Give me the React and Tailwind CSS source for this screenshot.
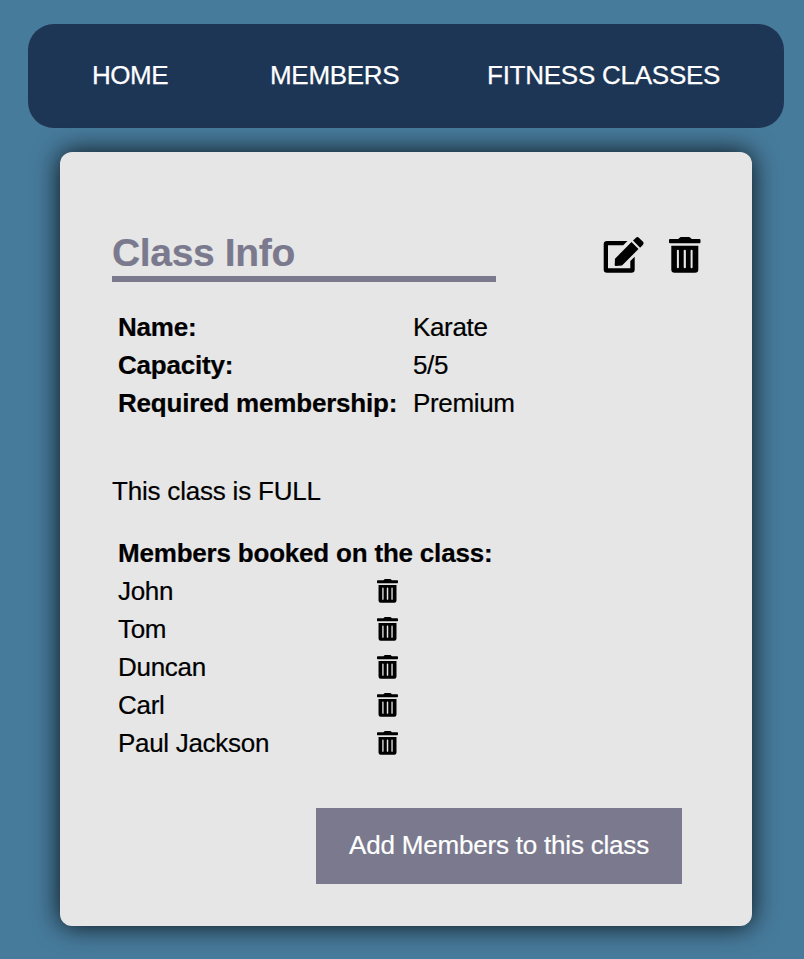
const members = ["John", "Tom", "Duncan", "Carl", "Paul Jackson"];

function Edit({ className }) {
  return (
    <svg viewBox="0 0 41 38" className={className} aria-hidden="true">
      <path d="M24.500 5H4Q.7 5 .7 8.300V33.400Q.7 36.700 4 36.700H28.400Q31.700 36.700 31.700 33.400V20.700L27.300 25V32.200H5V9.300H20.200Z" />
      <path d="M12 22.700L28.500 6.100 35.500 13.100 19 29.400 13 30Q11.700 30.100 11.700 29Z" />
      <path d="M30 4.600L32.700 1.900Q34.400.3 36.100 1.900L39.800 5.600Q41.400 7.300 39.800 9L37.100 11.700Z" />
    </svg>
  );
}

function Trash({ className }) {
  return (
    <svg viewBox="0 0 32 36" className={className} aria-hidden="true">
      <path
        fillRule="evenodd"
        d="M1 2h7.800Q9.700 2 10.400 1 11.100 0 12.200 0h7.600Q20.900 0 21.600 1 22.300 2 23.200 2h7.300q1 0 1 1v2.200q0 1-1 1H1q-1 0-1-1V3q0-1 1-1zM2.300 8.800h27V32.400q0 3.300-3.300 3.300H5.600q-3.300 0-3.300-3.300zM8.900 12.700q-1 0-1 1v16.600q0 1 1 1t1-1V13.700q0-1-1-1zM15.800 12.700q-1.100 0-1.100 1v16.600q0 1 1.100 1t1.100-1V13.700q0-1-1.100-1zM22.600 12.700q-1 0-1 1v16.600q0 1 1 1t1-1V13.700q0-1-1-1z"
      />
    </svg>
  );
}

export default function App() {
  return (
    <div className="min-h-[959px] w-[804px] overflow-hidden bg-[#477b9c] pt-6 text-[26px] leading-[30px] tracking-[-0.2px] text-black [font-family:'Liberation_Sans',Arial,sans-serif]">
      <nav className="ml-7 flex h-[104px] w-[756px] items-center rounded-[26px] bg-[#1e3655] pb-0.5 pl-16 tracking-[-0.25px] text-white [-webkit-text-stroke:0.25px_white]">
        <a className="w-[178px] whitespace-nowrap tracking-[-0.45px]">HOME</a>
        <a className="w-[217px] whitespace-nowrap tracking-[-0.3px]">MEMBERS</a>
        <a className="whitespace-nowrap">FITNESS CLASSES</a>
      </nav>
      <main className="ml-[60px] mt-6 h-[774px] w-[692px] rounded-xl bg-[#e6e6e6] px-[52px] pt-20 shadow-[0_0_27px_rgba(0,0,0,0.88)] [-webkit-text-stroke:0.2px]">
        <header className="flex h-[50px]">
          <h1 className="w-[384px] shrink-0 border-b-6 border-[#7a798e] text-[39px] font-bold leading-[42px] tracking-[-0.35px] text-[#7a798e]">Class Info</h1>
          <Edit className="ml-[107px] mt-1 h-[38px] w-[41px] shrink-0" />
          <Trash className="ml-[25px] mt-[5px] h-9 w-8 shrink-0" />
        </header>
        <dl className="mt-[26px] grid grid-cols-[295px_1fr] pl-1.5 leading-[38px]">
          <dt className="whitespace-nowrap font-bold">Name:</dt><dd className="tracking-[-0.35px]">Karate</dd>
          <dt className="whitespace-nowrap font-bold">Capacity:</dt><dd className="tracking-[-0.35px]">5/5</dd>
          <dt className="whitespace-nowrap font-bold">Required membership:</dt><dd className="tracking-[-0.35px]">Premium</dd>
        </dl>
        <p className="mt-[54px]">This class is FULL</p>
        <section className="mt-7 pl-1.5 leading-[38px]">
          <h2 className="font-bold">Members booked on the class:</h2>
          {members.map((name) => (
            <div key={name} className="flex h-[38px] items-center">
              <span className="w-[259px] tracking-[-0.3px]">{name}</span>
              <Trash className="h-6 w-[21.3px]" />
            </div>
          ))}
        </section>
        <button className="ml-[204px] mt-[46px] h-[76px] w-[366px] whitespace-nowrap bg-[#7a798e] pb-0.5 text-white">Add Members to this class</button>
      </main>
    </div>
  );
}
